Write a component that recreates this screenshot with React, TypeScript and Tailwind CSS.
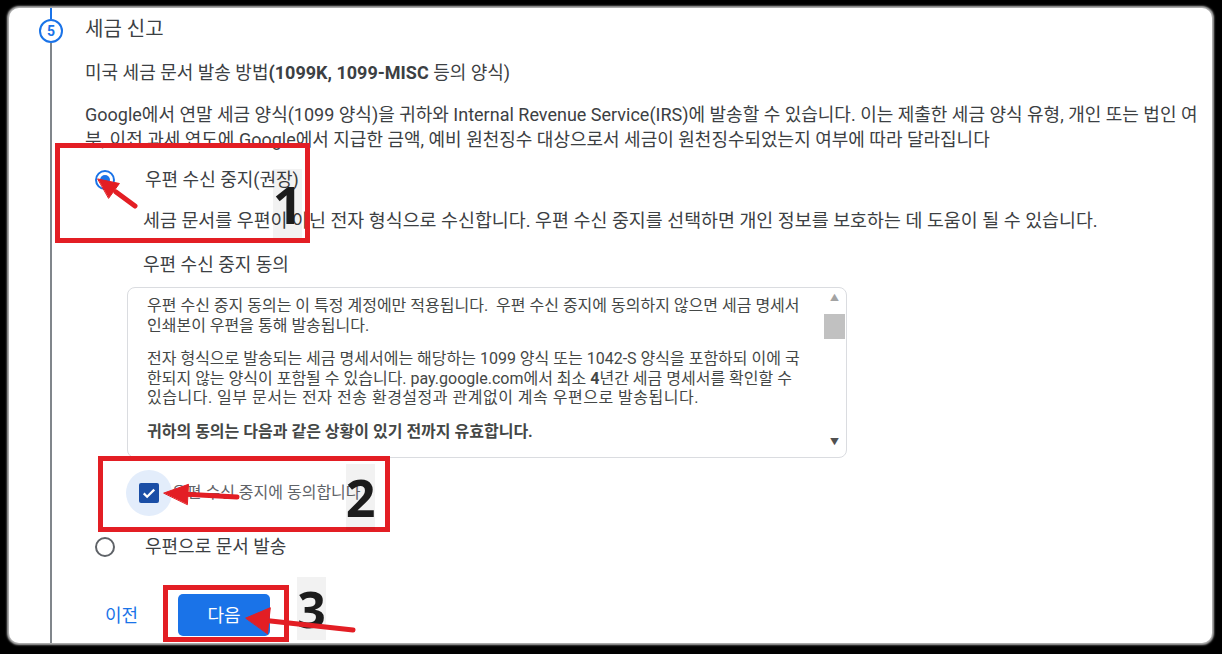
import React from 'react';

const font = "font-['Roboto','Noto_Sans_CJK_KR',sans-serif]";

function Radio({ checked }: { checked?: boolean }) {
  return checked ? (
    <span className="flex h-5 w-5 items-center justify-center rounded-full border-2 border-[#1a73e8]">
      <span className="h-[10px] w-[10px] rounded-full bg-[#1a73e8]" />
    </span>
  ) : (
    <span className="h-5 w-5 rounded-full border-2 border-[#5f6368]" />
  );
}

function ConsentBox() {
  return (
    <div className="ml-[42px] mt-[10px] flex h-[171px] w-[720px] overflow-hidden rounded-lg border border-[#dadce0]">
      <div className="flex-1 whitespace-nowrap pl-[19px] pt-[8px] text-[16px] leading-[19.5px] text-[#444746]">
        <p>
          우편 수신 중지 동의는 이 특정 계정에만 적용됩니다. &nbsp;우편 수신 중지에 동의하지 않으면 세금 명세서
          <br />
          인쇄본이 우편을 통해 발송됩니다.
        </p>
        <p className="mt-[14px]">
          전자 형식으로 발송되는 세금 명세서에는 해당하는 1099 양식 또는 1042-S 양식을 포함하되 이에 국
          <br />
          한되지 않는 양식이 포함될 수 있습니다. pay.google.com에서 최소 <b>4</b>년간 세금 명세서를 확인할 수
          <br />
          <span className="tracking-[0.5px]">있습니다. 일부 문서는 전자 전송 환경설정과 관계없이 계속 우편으로 발송됩니다.</span>
        </p>
        <p className="mt-[14px] font-bold">귀하의 동의는 다음과 같은 상황이 있기 전까지 유효합니다.</p>
      </div>
      {/* fake scrollbar */}
      <div className="mr-[1px] flex w-[21px] flex-col items-center">
        <div className="mt-[2px] flex h-[18px] items-center justify-center text-[9px] text-[#a3a3a3]">▲</div>
        <div className="mt-[6px] h-[25px] w-full bg-[#c1c1c1]" />
        <div className="flex-1" />
        <div className="mb-[5px] flex h-[18px] items-center justify-center text-[9px] text-[#505050]">▼</div>
      </div>
    </div>
  );
}

export default function App() {
  return (
    <div className={`relative h-[654px] w-[1222px] overflow-hidden bg-black pl-[9px] pt-[8px] ${font}`}>
      <div className="flex h-[635px] w-[1203px] overflow-hidden rounded-[10px] bg-white pl-[30px] shadow-[0_0_2px_2px_#b5b5b5]">
        {/* step rail */}
        <div className="flex w-6 shrink-0 flex-col items-center">
          <div className="h-[11px] w-[2px] bg-[#1a73e8]" />
          <div className="flex h-6 w-6 items-center justify-center rounded-full border-[2.5px] border-[#1a73e8] text-[14px] font-bold text-[#1a73e8]">
            5
          </div>
          <div className="w-[2px] flex-1 bg-[#80868b]" />
        </div>

        {/* step content */}
        <div className="ml-[22px] flex-1 whitespace-nowrap pt-[8px] text-[#3c4043]">
          <h2 className="text-[20px] leading-[26px]">세금 신고</h2>
          <p className="mt-[18px] text-[18px] leading-[25px]">
            미국 세금 문서 발송 방법<b>(1099K, 1099-MISC</b> 등의 양식)
          </p>
          <p className="mt-[17px] text-[18px] leading-[25px]">
            Google에서 연말 세금 양식(1099 양식)을 귀하와 Internal Revenue Service(IRS)에 발송할 수 있습니다. 이는 제출한 세금 양식 유형, 개인 또는 법인 여
            <br />
            부, 이전 과세 연도에 Google에서 지급한 금액, 예비 원천징수 대상으로서 세금이 원천징수되었는지 여부에 따라 달라집니다
          </p>

          <div className="mt-[15px] flex h-[25px] items-center pl-[10px] text-[18px]">
            <Radio checked />
            <span className="ml-[30px]">우편 수신 중지(권장)</span>
          </div>
          <p className="ml-[58px] mt-[16px] text-[18.4px] leading-[25px]">
            세금 문서를 우편이 아닌 전자 형식으로 수신합니다. 우편 수신 중지를 선택하면 개인 정보를 보호하는 데 도움이 될 수 있습니다.
          </p>
          <p className="ml-[58px] mt-[19px] text-[18px] leading-[25px]">우편 수신 중지 동의</p>

          <ConsentBox />

          <div className="ml-[41px] mt-[12px] flex items-center">
            <div className="flex h-[46px] w-[46px] items-center justify-center rounded-full bg-[#e3edfb]">
              <span className="flex h-5 w-5 items-center justify-center rounded-[2px] bg-[#1a4ea6]">
                <svg viewBox="0 0 24 24" className="h-[18px] w-[18px]" fill="none" stroke="white" strokeWidth="3">
                  <path d="M5 12.5l4.5 4.5L19 7.5" />
                </svg>
              </span>
            </div>
            <span className="text-[16px] text-[#5f6368]">우편 수신 중지에 동의합니다</span>
          </div>

          <div className="mt-[18px] flex h-[25px] items-center pl-[10px] text-[18px]">
            <Radio />
            <span className="ml-[30px]">우편으로 문서 발송</span>
          </div>

          <div className="mt-[35px] flex items-center">
            <button className="pl-5 text-[18px] text-[#1a73e8]">이전</button>
            <button className="ml-[40px] h-[42px] w-[92px] rounded-[5px] bg-[#1a73e8] text-[18px] text-white">다음</button>
          </div>
        </div>
      </div>

      {/* annotations */}
      <div className="absolute left-[55px] top-[143px] h-[100px] w-[255px] border-[5px] border-[#e31e24]" />
      <div className="absolute left-[98px] top-[456px] h-[76px] w-[292px] border-[5px] border-[#e31e24]" />
      <div className="absolute left-[163px] top-[585px] h-[57px] w-[126px] border-[5px] border-[#e31e24]" />

      <div className="absolute left-[273px] top-[169px] flex h-[69px] w-[29px] items-center justify-center bg-black/[0.05] font-['Noto_Sans',sans-serif] text-[52px] font-bold leading-none text-[#1c1c1c]">
        1
      </div>
      <div className="absolute left-[346px] top-[464px] flex h-[66px] w-[29px] items-center justify-center bg-black/[0.05] font-['Noto_Sans',sans-serif] text-[52px] font-bold leading-none text-[#1c1c1c]">
        2
      </div>
      <div className="absolute left-[297px] top-[577px] flex h-[63px] w-[29px] items-center justify-center bg-black/[0.05] font-['Noto_Sans',sans-serif] text-[50px] font-bold leading-none text-[#1c1c1c]">
        3
      </div>

      <svg className="pointer-events-none absolute inset-0" width="1222" height="654" viewBox="0 0 1222 654">
        <g fill="#e31e24" stroke="#e31e24" strokeWidth="5" strokeLinecap="round">
          <line x1="135" y1="206" x2="116" y2="192" />
          <polygon points="98,179 119.4,183.5 108.8,198.1" strokeWidth="1" />
          <line x1="237" y1="497" x2="186" y2="494.3" />
          <polygon points="164,493 188.5,484.3 187.4,504.3" strokeWidth="1" />
          <line x1="353" y1="630" x2="266" y2="620.4" />
          <polygon points="246,618 270.3,607.7 267.5,633.5" strokeWidth="1" />
        </g>
      </svg>
    </div>
  );
}
